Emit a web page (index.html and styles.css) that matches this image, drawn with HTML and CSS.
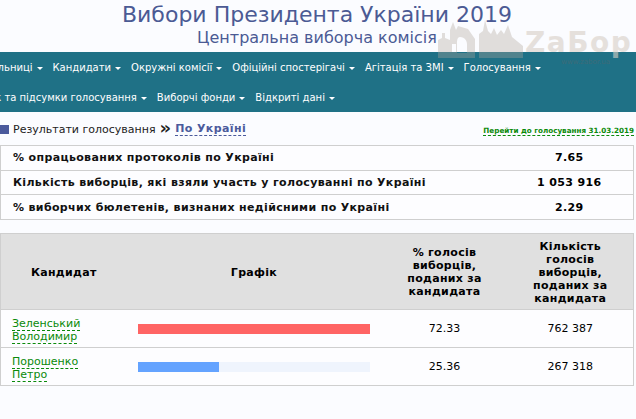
FILE: index.html
```html
<!DOCTYPE html>
<html lang="uk">
<head>
    <meta charset="UTF-8">
    <title>Вибори Президента України 2019</title>
    <link rel="stylesheet" href="styles.css">
</head>
<body>

<div class="header">
    <h1>Вибори Президента України 2019</h1>
    <h2>Центральна виборча комісія</h2>
</div>

<div class="menu">
    <ul class="menu-row first">
        <li>Дільниці</li>
        <li>Кандидати</li>
        <li>Окружні комісії</li>
        <li>Офіційні спостерігачі</li>
        <li>Агітація та ЗМІ</li>
        <li>Голосування</li>
    </ul>
    <ul class="menu-row second">
        <li>Підрахунок та підсумки голосування</li>
        <li>Виборчі фонди</li>
        <li>Відкриті дані</li>
    </ul>
</div>

<div class="crumbs">
    <div class="crumbs-left">
        <span class="square"></span>
        <span>Результати голосування</span>
        <b class="arrows">»</b>
        <a class="here" href="#">По Україні</a>
    </div>
    <a class="jump" href="#">Перейти до голосування 31.03.2019</a>
</div>

<table class="summary">
    <tr>
        <td class="summary-name">% опрацьованих протоколів по Україні</td>
        <td class="summary-value">7.65</td>
    </tr>
    <tr>
        <td class="summary-name">Кількість виборців, які взяли участь у голосуванні по Україні</td>
        <td class="summary-value">1 053 916</td>
    </tr>
    <tr>
        <td class="summary-name">% виборчих бюлетенів, визнаних недійсними по Україні</td>
        <td class="summary-value">2.29</td>
    </tr>
</table>

<table class="results">
    <thead>
        <tr>
            <th class="col-name">Кандидат</th>
            <th class="col-chart">Графік</th>
            <th class="col-percent">% голосів виборців, поданих за кандидата</th>
            <th class="col-count">Кількість голосів виборців, поданих за кандидата</th>
        </tr>
    </thead>
    <tbody>
        <tr>
            <td class="name"><a href="#">Зеленський</a><br><a href="#">Володимир</a></td>
            <td><div class="bar"><div class="fill red" style="width: 100%"></div></div></td>
            <td>72.33</td>
            <td>762 387</td>
        </tr>
        <tr>
            <td class="name"><a href="#">Порошенко</a><br><a href="#">Петро</a></td>
            <td><div class="bar"><div class="fill blue" style="width: 35.3%"></div></div></td>
            <td>25.36</td>
            <td>267 318</td>
        </tr>
    </tbody>
</table>

<div class="watermark">
    <svg class="skyline" width="85" height="38" viewBox="0 0 85 38">
        <path fill-rule="evenodd" d="M0 38V20L4 18V13H7V18L12 20V10L15 2L18 10L20 6L30 9L37 19V38ZM14 24V32H18V24ZM22 17C19 17 19 21 19 24V33H29V24C29 21 27 17 22 17ZM41 38V14L45 11L47 0L50 11L53 14L56 8L59 15L63 10L66 14L70 5L74 17L85 26V38Z"/>
    </svg>
    <span class="wm-text">ZaБор</span>
    <span class="wm-small">www.zabor.ua</span>
</div>

</body>
</html>
```

FILE: styles.css
```css
* {
    box-sizing: border-box;
    margin: 0;
    padding: 0;
}

html, body {
    height: 100%;
    overflow: hidden;
}

body {
    background-color: #fbfcff;
    font-family: "DejaVu Sans", Verdana, sans-serif;
    font-size: 12px;
    color: #000;
    position: relative;
}

.header {
    height: 52px;
    text-align: center;
    color: #4b5a94;
    padding-top: 1px;
    padding-right: 2px;
}

.header h1 {
    font-size: 22px;
    font-weight: normal;
    line-height: 27px;
}

.header h2 {
    font-size: 16px;
    font-weight: normal;
    line-height: 19px;
}

.menu {
    height: 60px;
    background-color: #1f7186;
    overflow: hidden;
}

.menu-row {
    display: flex;
    height: 30px;
    align-items: center;
    gap: 10px;
    list-style: none;
    color: #fff;
    font-size: 10px;
    white-space: nowrap;
}

.menu-row.first {
    margin-left: -13px;
}

.menu-row.second {
    margin-left: -59px;
}

.menu-row li::after {
    content: "";
    display: inline-block;
    margin-left: 4px;
    vertical-align: 1px;
    border-style: solid;
    border-width: 3px 3px 0;
    border-color: #fff transparent transparent;
}

.crumbs {
    display: flex;
    justify-content: space-between;
    align-items: center;
    height: 33px;
    padding-top: 1px;
    padding-right: 2px;
}

.crumbs-left {
    display: flex;
    align-items: center;
    gap: 4px;
    font-size: 11px;
    color: #222;
}

.square {
    width: 9px;
    height: 9px;
    background-color: #4b5a9c;
}

.arrows {
    font-size: 18px;
    line-height: 14px;
    margin-top: -3px;
}

.here {
    font-weight: bold;
    color: #4b5a9c;
    text-decoration: none;
    border-bottom: 1px dashed #4b5a9c;
    letter-spacing: 0.4px;
}

.jump {
    font-size: 7.2px;
    font-weight: bold;
    color: #0a8a0a;
    text-decoration: none;
    border-bottom: 1px dashed #0a8a0a;
    margin-top: 3px;
}

table {
    border-collapse: collapse;
    width: 634px;
    background-color: #fdfdff;
    border: 1px solid #cfcfcf;
}

tr {
    border-bottom: 1px solid #cfcfcf;
}

.summary {
    height: 75px;
    font-size: 11px;
    font-weight: bold;
    letter-spacing: 0.35px;
}

.summary-name {
    padding-left: 12px;
    color: #111;
}

.summary-value {
    width: 128px;
    text-align: center;
}

.results {
    margin-top: 13px;
    table-layout: fixed;
    font-size: 11px;
    text-align: center;
}

.results th {
    height: 76px;
    padding-top: 1px;
    background-color: #e0e0e0;
    font-size: 11px;
    letter-spacing: 0.3px;
    line-height: 13px;
}

.results td {
    height: 38px;
}

.col-name {
    width: 126px;
}

.col-chart {
    width: 255px;
}

.col-percent {
    width: 126px;
    padding: 0 22px;
}

.col-count {
    padding: 0 22px;
}

td.name {
    text-align: left;
    padding-left: 11px;
    padding-top: 2px;
    line-height: 13px;
}

.name a {
    color: #0a8a0a;
    text-decoration: none;
    border-bottom: 1px dashed #0a8a0a;
}

.bar {
    width: 232px;
    height: 10px;
    margin-left: 11px;
    background-color: #eff4fd;
}

.fill {
    height: 10px;
}

.red {
    background-color: #ff6464;
}

.blue {
    background-color: #64a3ff;
}

.watermark {
    position: absolute;
    left: 438px;
    top: 16px;
    width: 198px;
    height: 54px;
    overflow: hidden;
}

.skyline {
    position: absolute;
    left: 0;
    top: 4px;
    fill: #b0a59a;
    opacity: 0.35;
}

.wm-text {
    position: absolute;
    left: 87px;
    top: 13px;
    font-size: 28px;
    font-weight: bold;
    line-height: 28px;
    letter-spacing: 1.5px;
    color: #d8cfc6;
    opacity: 0.6;
}

.wm-small {
    position: absolute;
    right: 26px;
    bottom: 4px;
    font-size: 7px;
    color: #4b6a74;
    opacity: 0.7;
}
```
